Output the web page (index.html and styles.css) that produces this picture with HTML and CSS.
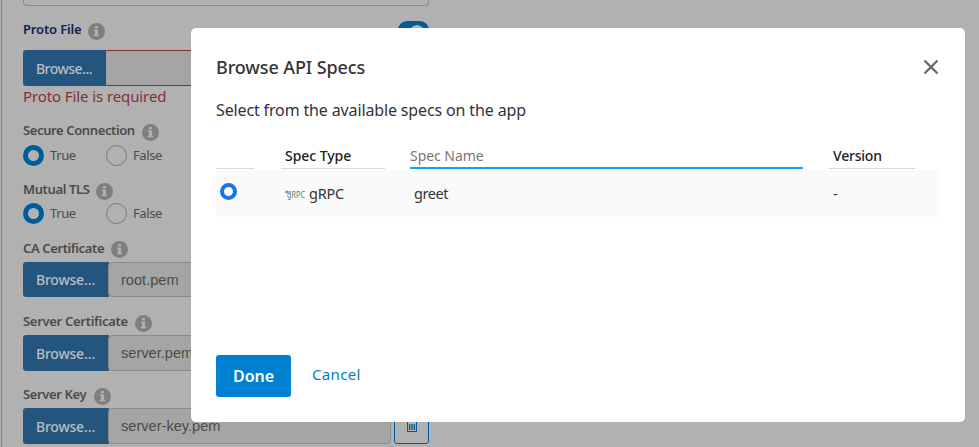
FILE: index.html
```html
<!DOCTYPE html>
<html lang="en">
<head>
<meta charset="utf-8">
<title>Browse API Specs</title>
<link rel="stylesheet" href="styles.css">
</head>
<body>
<svg width="0" height="0" class="defs">
  <symbol id="info" viewBox="0 0 17 17"><circle cx="8.5" cy="8.5" r="8.5" fill="#7f7f7f"/><path d="M7 3h3v2.300H7zM6 6.500h4v5.200h1.200V13.300H5.800V11.700H7V8.100H6z" fill="#b1b1b1"/></symbol>
</svg>
<main class="form">
  <div class="top-input"></div>
  <div class="label proto"><span>Proto File</span><svg class="info"><use href="#info"/></svg></div>
  <div class="file invalid"><button class="browse">Browse...</button><div class="value"></div></div>
  <div class="error">Proto File is required</div>
  <div class="label secure"><span>Secure Connection</span><svg class="info"><use href="#info"/></svg></div>
  <div class="radios"><i class="radio on"></i><span class="true">True</span><i class="radio"></i><span>False</span></div>
  <div class="label mutual"><span>Mutual TLS</span><svg class="info"><use href="#info"/></svg></div>
  <div class="radios"><i class="radio on"></i><span class="true">True</span><i class="radio"></i><span>False</span></div>
  <div class="label ca"><span>CA Certificate</span><svg class="info"><use href="#info"/></svg></div>
  <div class="file short"><button class="browse">Browse…</button><div class="value">root.pem</div></div>
  <div class="label cert"><span>Server Certificate</span><svg class="info"><use href="#info"/></svg></div>
  <div class="file"><button class="browse">Browse…</button><div class="value">server.pem</div></div>
  <div class="label key"><span>Server Key</span><svg class="info"><use href="#info"/></svg></div>
  <div class="file"><button class="browse">Browse…</button><div class="value">server-key.pem</div>
    <button class="trash"><svg width="12" height="14" viewBox="0 0 12 14" fill="none" stroke="#005c98"><path d="M.5 2.500h11M4 2V.5h4V2M1.500 3v9.500h9V3M3.500 5v6M5.200 5v6M6.900 5v6M8.600 5v6"/></svg></button></div>
</main>
<div class="switch"></div>
<section class="modal">
  <header><h1>Browse API Specs</h1><svg class="close" width="14" height="14" viewBox="0 0 14 14"><path d="M1.200 1.200l11.600 11.600M12.800 1.200L1.200 12.800" stroke="#666" stroke-width="2.300" stroke-linecap="round"/></svg></header>
  <p class="intro">Select from the available specs on the app</p>
  <div class="grid heads">
    <div class="h0"></div><div class="h1">Spec Type</div><div class="h2">Spec Name</div><div class="h3">Version</div>
  </div>
  <div class="grid row">
    <div><i class="pick"></i></div>
    <div class="type"><svg width="21" height="10" viewBox="0 0 21 10"><path d="M0 2h6M2 .5v3" stroke="#16968c"/><text x="2" y="8" textLength="18" lengthAdjust="spacingAndGlyphs">gRPC</text></svg><span>gRPC</span></div>
    <div class="name">greet</div><div class="ver">-</div>
  </div>
  <footer><button class="done">Done</button><a>Cancel</a></footer>
</section>
</body>
</html>
```
FILE: styles.css
```css
* { box-sizing: border-box; }
body { margin: 0; width: 979px; height: 447px; overflow: hidden; position: relative; background: #b1b1b1; font-family: "Noto Sans", sans-serif; color: #4b4b4b; }
button { font: inherit; border: 0; padding: 0; }
.defs { position: absolute; }
.form { margin-left: 1px; border-left: 1px solid #858585; height: 447px; padding-left: 21px; }
.top-input { width: 406px; height: 6px; border: 1px solid #8b8b8b; border-top: 0; border-radius: 0 0 4px 4px; }
.label { display: flex; align-items: center; gap: 7px; height: 20px; font-size: 13px; font-weight: 600; line-height: 18px; white-space: nowrap; letter-spacing: -.38px; }
.label span { flex: none; height: 20px; }
.info { width: 17px; height: 17px; position: relative; top: 1px; }
.proto { margin: 14px 0 10px; color: #0d2350; letter-spacing: -.15px; }
.proto span { line-height: 18px; }
.secure { margin: 13px 0 3px; }
.mutual { margin: 14px 0 2px; }
.ca { margin: 14px 0 4px; line-height: 20px; }
.cert { margin: 15px 0 3px; letter-spacing: -.3px; }
.key { margin: 14px 0 3px; }
.proto span { width: 58px; }
.secure span { width: 112px; }
.mutual span { width: 66px; }
.ca span { width: 81px; }
.cert span { width: 105px; }
.key span { width: 64px; }
.file { display: flex; width: 406px; height: 36px; }
.file.short { height: 35px; }
.browse { width: 86px; flex: none; background: #24557f; color: #b9bec3; font-size: 14px; border-radius: 3px 0 0 3px; letter-spacing: -.2px; padding-right: 1px; font-weight: 500; }
.value { width: 283px; margin-left: -1px; background: #a5a5a5; border: 1px solid #8b8b8b; border-radius: 4px; padding-left: 12px; font: 14.600px/34px "Liberation Sans", sans-serif; }
.invalid .browse { width: 83px; letter-spacing: -.5px; }
.invalid .value { border-color: #853030; border-radius: 0; }
.trash { width: 35px; margin-left: 3px; border: 1px solid #005c98; border-radius: 3px; background: #b1b1b1; padding-top: 2px; }
.error { height: 22px; font-size: 15px; line-height: 21px; color: #853030; letter-spacing: -.1px; }
.radios { display: flex; align-items: center; height: 22px; font-size: 13px; letter-spacing: -.4px; }
.radio { width: 21px; height: 21px; border: 1px solid #777; border-radius: 50%; margin-right: 6px; }
.radio.on { border: 5px solid #005c98; }
.true { width: 56px; }
.switch { position: absolute; left: 398px; top: 21px; width: 31px; height: 18px; border-radius: 9px; background: radial-gradient(circle at 19px 12px, #b1b1b1 7.500px, #005c98 8px); }
.modal { position: absolute; left: 191px; top: 28px; width: 774px; height: 394px; border-radius: 5px; background: #fff; padding: 0 25px; color: #333; }
.modal header { display: flex; justify-content: space-between; padding-top: 25px; height: 67px; }
h1 { margin: 0; font-size: 18px; line-height: 28px; font-weight: 500; letter-spacing: -.1px; }
.close { margin: 7px 2px 0 0; }
.intro { margin: 0; font-size: 16px; line-height: 30px; letter-spacing: -.14px; height: 46px; white-space: nowrap; }
.grid { display: grid; grid-template-columns: 65px 129px 423px 107px; }
.heads { height: 29px; font-size: 14px; line-height: 29px; letter-spacing: -.05px; }
.heads div { height: 28px; border-bottom: 1px solid #d8d8d8; }
.h0 { width: 38px; }
.heads .h1 { width: 104px; padding-left: 4px; font-weight: 500; color: #222; }
.heads .h2 { border-bottom: 2px solid #03a9f4; width: 393px; color: #777; }
.heads .h3 { width: 86px; margin-left: -4px; padding-left: 4px; font-weight: 500; color: #222; letter-spacing: -.2px; }
.row { height: 47px; background: #fafafa; font-size: 14.500px; line-height: 46px; }
.pick { display: block; width: 17px; height: 17px; margin: 13px 0 0 4px; border: 4px solid #1a73e8; border-radius: 50%; background: #fff; }
.type { display: flex; align-items: center; gap: 3px; padding-left: 4px; letter-spacing: -.2px; }
.type svg { margin-top: 2px; }
.type span { line-height: 46px; height: 47px; }
.type text { font-size: 8px; fill: #567b80; letter-spacing: 0; }
.name { padding-left: 4px; letter-spacing: -.4px; }
footer { display: flex; align-items: flex-start; gap: 21px; margin-top: 138px; }
.done { width: 75px; height: 42px; border-radius: 3px; background: #0080d0; color: #fff; font-size: 16px; font-weight: 600; }
footer a { color: #007bc4; font-size: 15px; line-height: 38px; letter-spacing: .35px; }
```
